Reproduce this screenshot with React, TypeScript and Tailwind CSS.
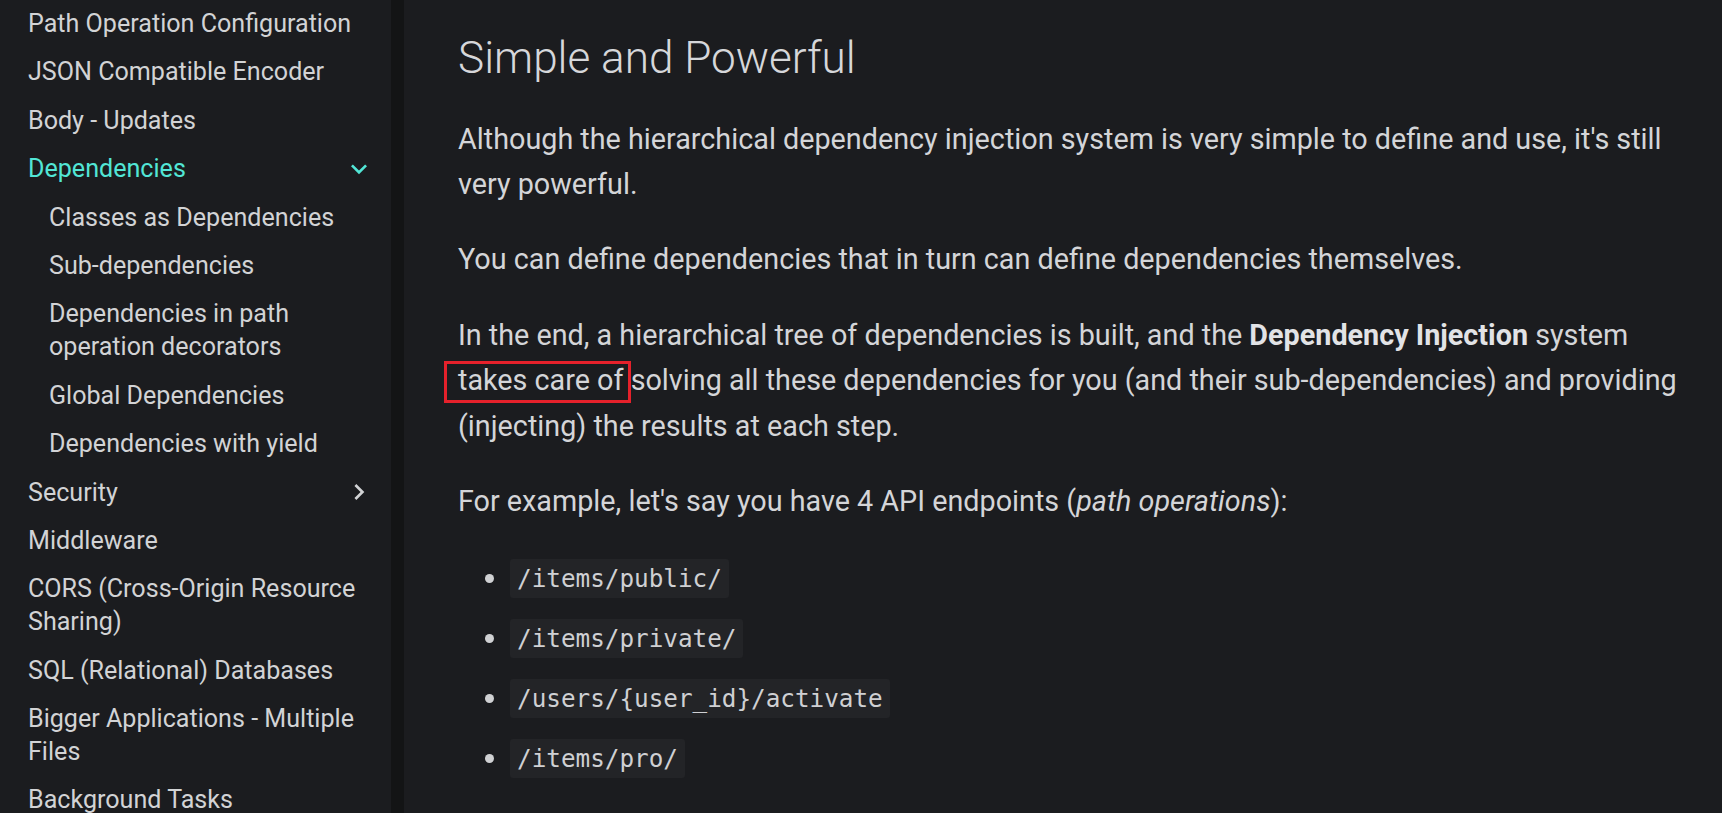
import React from "react";

const ChevronRight = ({ className }: { className?: string }) => (
  <svg viewBox="0 0 24 24" width="32" height="32" className={className} fill="currentColor">
    <path d="M8.59 16.58 13.17 12 8.59 7.41 10 6l6 6-6 6z" />
  </svg>
);

const ChevronDown = ({ className }: { className?: string }) => (
  <svg viewBox="0 0 24 24" width="32" height="32" className={className} fill="currentColor">
    <path d="M7.41 8.59 12 13.17l4.59-4.58L18 10l-6 6-6-6z" />
  </svg>
);

type Item = { label: string; nested?: boolean; active?: boolean; icon?: "down" | "right" };

const items: Item[] = [
  { label: "Path Operation Configuration" },
  { label: "JSON Compatible Encoder" },
  { label: "Body - Updates" },
  { label: "Dependencies", active: true, icon: "down" },
  { label: "Classes as Dependencies", nested: true },
  { label: "Sub-dependencies", nested: true },
  { label: "Dependencies in path operation decorators", nested: true },
  { label: "Global Dependencies", nested: true },
  { label: "Dependencies with yield", nested: true },
  { label: "Security", icon: "right" },
  { label: "Middleware" },
  { label: "CORS (Cross-Origin Resource Sharing)" },
  { label: "SQL (Relational) Databases" },
  { label: "Bigger Applications - Multiple Files" },
  { label: "Background Tasks" },
  { label: "Metadata and Docs URLs" },
];

const endpoints = ["/items/public/", "/items/private/", "/users/{user_id}/activate", "/items/pro/"];

export default function App() {
  return (
    <div
      className="flex h-[813px] w-[1722px] overflow-hidden bg-[#1b1c1f]"
      style={{ fontFamily: "Roboto, 'Noto Sans', sans-serif" }}
    >
      <nav className="w-[391px] shrink-0 bg-[#1b1c1f] pl-[28px] pr-[16px] pt-[7px]">
        <ul className="flex flex-col gap-[15.4px]">
          {items.map((it) => (
            <li
              key={it.label}
              className={`flex items-center justify-between text-[25.1px] leading-[33px] ${
                it.nested ? "pl-[21px]" : ""
              } ${it.active ? "text-[#52e6d6]" : "text-[#d2d3d5]"}`}
            >
              <span>{it.label}</span>
              {it.icon === "down" && <ChevronDown className="shrink-0 text-[#52e6d6]" />}
              {it.icon === "right" && <ChevronRight className="shrink-0 text-[#d2d3d5]" />}
            </li>
          ))}
        </ul>
      </nav>
      <div className="w-[13px] shrink-0 bg-[#131415]" />
      <main className="flex-1 pl-[54px] pr-[32px] pt-[28px] text-[28.75px] leading-[45.6px] text-[#d4d5d8]">
        <h2 className="mb-[27px] text-[44.1px] font-light leading-[1.4] text-[#d6d7da]">
          Simple and Powerful
        </h2>
        <p className="mb-[29.5px]">
          Although the hierarchical dependency injection system is very simple to define and use, it's still very
          powerful.
        </p>
        <p className="mb-[29.5px]">You can define dependencies that in turn can define dependencies themselves.</p>
        <p className="mb-[29.5px]">
          In the end, a hierarchical tree of dependencies is built, and the{" "}
          <strong className="font-bold text-[#e2e3e6]">Dependency Injection</strong> system{" "}
          <span className="relative">
            takes care of{" "}
            <span className="pointer-events-none absolute bottom-[-6px] left-[-14px] right-0 top-[-2px] border-[3px] border-[#e5212b]" />
          </span>
          solving all these dependencies for you (and their sub-dependencies) and providing (injecting) the results at
          each step.
        </p>
        <p className="mb-[29.5px]">
          For example, let's say you have 4 API endpoints (<em className="italic">path operations</em>):
        </p>
        <ul className="pt-[2px]">
          {endpoints.map((e) => (
            <li key={e} className="mb-[14.4px] flex h-[45.6px] items-center">
              <span className="ml-[27px] mr-[16px] h-[9px] w-[9px] shrink-0 rounded-full bg-[#d0d1d3]" />
              <code
                className="rounded-[3px] bg-[#232427] px-[7px] text-[24.3px] leading-[39px] text-[#cfd0d3]"
                style={{ fontFamily: "'DejaVu Sans Mono', 'Liberation Mono', monospace" }}
              >
                {e}
              </code>
            </li>
          ))}
        </ul>
      </main>
    </div>
  );
}
